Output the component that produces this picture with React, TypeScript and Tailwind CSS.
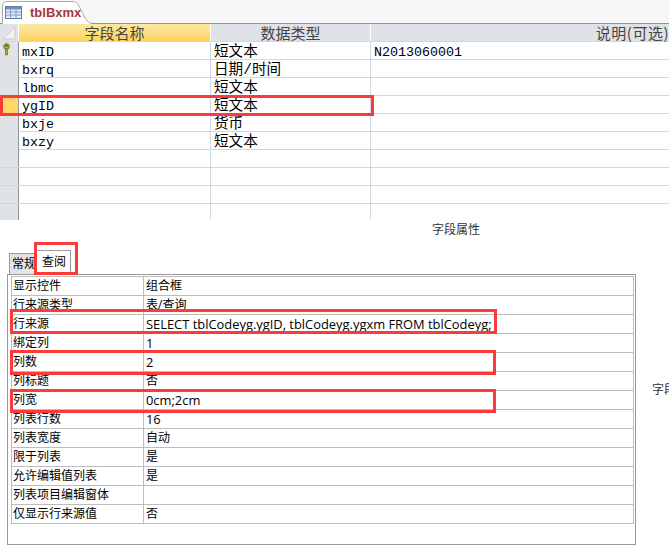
import React from 'react';

const fields = [
  { name: 'mxID', type: '短文本', note: 'N2013060001', key: true },
  { name: 'bxrq', type: '日期/时间' },
  { name: 'lbmc', type: '短文本' },
  { name: 'ygID', type: '短文本', selected: true },
  { name: 'bxje', type: '货币' },
  { name: 'bxzy', type: '短文本' },
  { name: '', type: '' },
  { name: '', type: '' },
  { name: '', type: '' },
  { name: '', type: '' },
];

const props = [
  ['显示控件', '组合框'],
  ['行来源类型', '表/查询'],
  ['行来源', 'SELECT tblCodeyg.ygID, tblCodeyg.ygxm FROM tblCodeyg;'],
  ['绑定列', '1'],
  ['列数', '2'],
  ['列标题', '否'],
  ['列宽', '0cm;2cm'],
  ['列表行数', '16'],
  ['列表宽度', '自动'],
  ['限于列表', '是'],
  ['允许编辑值列表', '是'],
  ['列表项目编辑窗体', ''],
  ['仅显示行来源值', '否'],
];

const cjk = "font-['Liberation_Mono','Noto_Sans_CJK_SC',monospace]";
const sheetFont = "font-['Open_Sans','Noto_Sans_CJK_SC',sans-serif]";

const KeyIcon = () => (
  <svg width="9" height="13" viewBox="0 0 9 13">
    <circle cx="4.5" cy="3.5" r="2.8" fill="#b9b04a" stroke="#6f6a22" strokeWidth="1" />
    <rect x="3.5" y="2" width="2" height="1.5" fill="#3d3a12" />
    <path d="M3.5 6 h2 v6 h-2 z" fill="#a8a03c" stroke="#6f6a22" strokeWidth="0.6" />
  </svg>
);

const TableIcon = () => (
  <svg width="17" height="13" viewBox="0 0 17 13">
    <rect x="0.5" y="0.5" width="16" height="12" fill="#e8eef8" stroke="#5f7fa8" />
    <rect x="1" y="1" width="15" height="2.5" fill="#6f8fbc" />
    <path d="M0.5 6 H16.5 M0.5 9 H16.5 M5.5 3.5 V12.5 M11 3.5 V12.5" stroke="#7f9ac0" strokeWidth="1" />
  </svg>
);

const App = () => {
  return (
    <div className="relative w-[669px] h-[547px] overflow-hidden bg-white">
      {/* object tab */}
      <div className="relative h-[24px] bg-[#f6f6f6] border-b border-[#8f9296]">
        <svg className="absolute left-0 top-0" width="95" height="24" viewBox="0 0 95 24">
          <path d="M2.5 24 V6 Q2.5 1.5 7 1.5 H72 Q77 1.5 79 6 L85 18 Q87 22 91 23.5 V24 Z" fill="#ffffff" stroke="#a9adb3" />
          <path d="M3 24 H90" stroke="#ffffff" strokeWidth="2" />
        </svg>
        <div className="absolute left-[5px] top-[5px] flex items-center gap-[8px]">
          <TableIcon />
          <span className="font-['Liberation_Sans',sans-serif] text-[13px] font-bold leading-[15px] text-[#a4373a]">tblBxmx</span>
        </div>
      </div>

      {/* field grid */}
      <div className="grid grid-cols-[19px_192px_160px_298px] h-[18px] bg-[#dfe2e6] border-b border-[#d0d7e0] text-[15px] leading-[17px] text-[#444] font-['Noto_Sans_CJK_SC',sans-serif]">
        <div className="relative border-r border-white overflow-hidden">
          <svg className="absolute left-0 top-0" width="18" height="17" viewBox="0 0 18 17">
            <path d="M15 3 V15 H3 Z" fill="#eef0f2" stroke="#c9cdd2" />
          </svg>
        </div>
        <div className="text-center bg-gradient-to-b from-[#fde8a4] to-[#fbd35c] border-r border-white">字段名称</div>
        <div className="text-center border-r border-white">数据类型</div>
        <div className="text-right whitespace-nowrap tracking-[0.5px]">说明(可选)</div>
      </div>
      {fields.map((f, i) => (
        <div
          key={i}
          className={`grid grid-cols-[19px_192px_160px_298px] ${cjk} ${i < fields.length - 1 ? 'h-[18px] border-b border-[#d0d7e0]' : 'h-[16px]'}`}
        >
          <div className={`flex justify-center pt-[1px] pr-[5px] border-r border-[#8f959c] ${f.selected ? 'bg-[#ffd966]' : 'bg-[#dfe2e6]'}`}>
            {f.key && <KeyIcon />}
          </div>
          <div className="pl-[3px] pt-[1px] text-[13.33px] leading-[20px] text-black border-r border-[#d0d7e5]">{f.name}</div>
          <div className="pl-[3px] pt-[2px] text-[14.6px] leading-[17px] text-black border-r border-[#d0d7e5] whitespace-nowrap">{f.type}</div>
          <div className="pl-[3px] pt-[1px] text-[13.33px] leading-[20px] text-black">{f.note}</div>
        </div>
      ))}

      <div className={`pl-[432px] mt-[1px] h-[23px] text-[12px] leading-[18px] text-[#333] ${sheetFont}`}>字段属性</div>

      {/* property tabs */}
      <div className={`flex items-end pl-[9px] mt-[6px] h-[24px] text-[12px] text-black ${sheetFont}`}>
        <div className="w-[28px] h-[21px] bg-[#e4e4e4] border border-b-0 border-[#9a9a9a] pl-[2px] leading-[20px] whitespace-nowrap overflow-hidden">常规</div>
        <div className="w-[34px] h-[24px] bg-white border-t border-r border-[#9a9a9a] pl-[5px] leading-[22px] whitespace-nowrap">查阅</div>
      </div>

      {/* property sheet + side label */}
      <div className="flex items-start">
        <div className="shrink-0 ml-[7px] w-[629px] h-[271px] border border-[#9a9a9a] pl-[3px] pr-[1px] pt-[1px]">
          <div className={`border border-[#bdbdbd] border-b-0 text-[12px] text-black ${sheetFont}`}>
            {props.map(([label, value]) => (
              <div key={label} className="grid grid-cols-[132px_1fr] h-[19px] border-b border-[#bdbdbd] leading-[18px]">
                <div className="pl-[1px] border-r border-[#bdbdbd] whitespace-nowrap">{label}</div>
                <div className={`pl-[2px] whitespace-nowrap ${/^[\x00-\x7f]+$/.test(value) ? 'text-[12.9px]' : ''}`}>{value}</div>
              </div>
            ))}
          </div>
        </div>
        <div className={`shrink-0 ml-[16px] mt-[107px] text-[12px] leading-[18px] text-[#333] whitespace-nowrap ${sheetFont}`}>字段属性</div>
      </div>

      {/* red annotation boxes */}
      <div className="absolute left-0 top-[95px] w-[374px] h-[21px] border-[3px] border-[#fd3a3a]" />
      <div className="absolute left-[34px] top-[242px] w-[44px] h-[33px] border-[3px] border-[#fd3a3a]" />
      <div className="absolute left-[10px] top-[309px] w-[487px] h-[25px] border-[3px] border-[#fd3a3a]" />
      <div className="absolute left-[10px] top-[350px] w-[486px] h-[25px] border-[3px] border-[#fd3a3a]" />
      <div className="absolute left-[10px] top-[389px] w-[486px] h-[24px] border-[3px] border-[#fd3a3a]" />
    </div>
  );
};

export default App;
